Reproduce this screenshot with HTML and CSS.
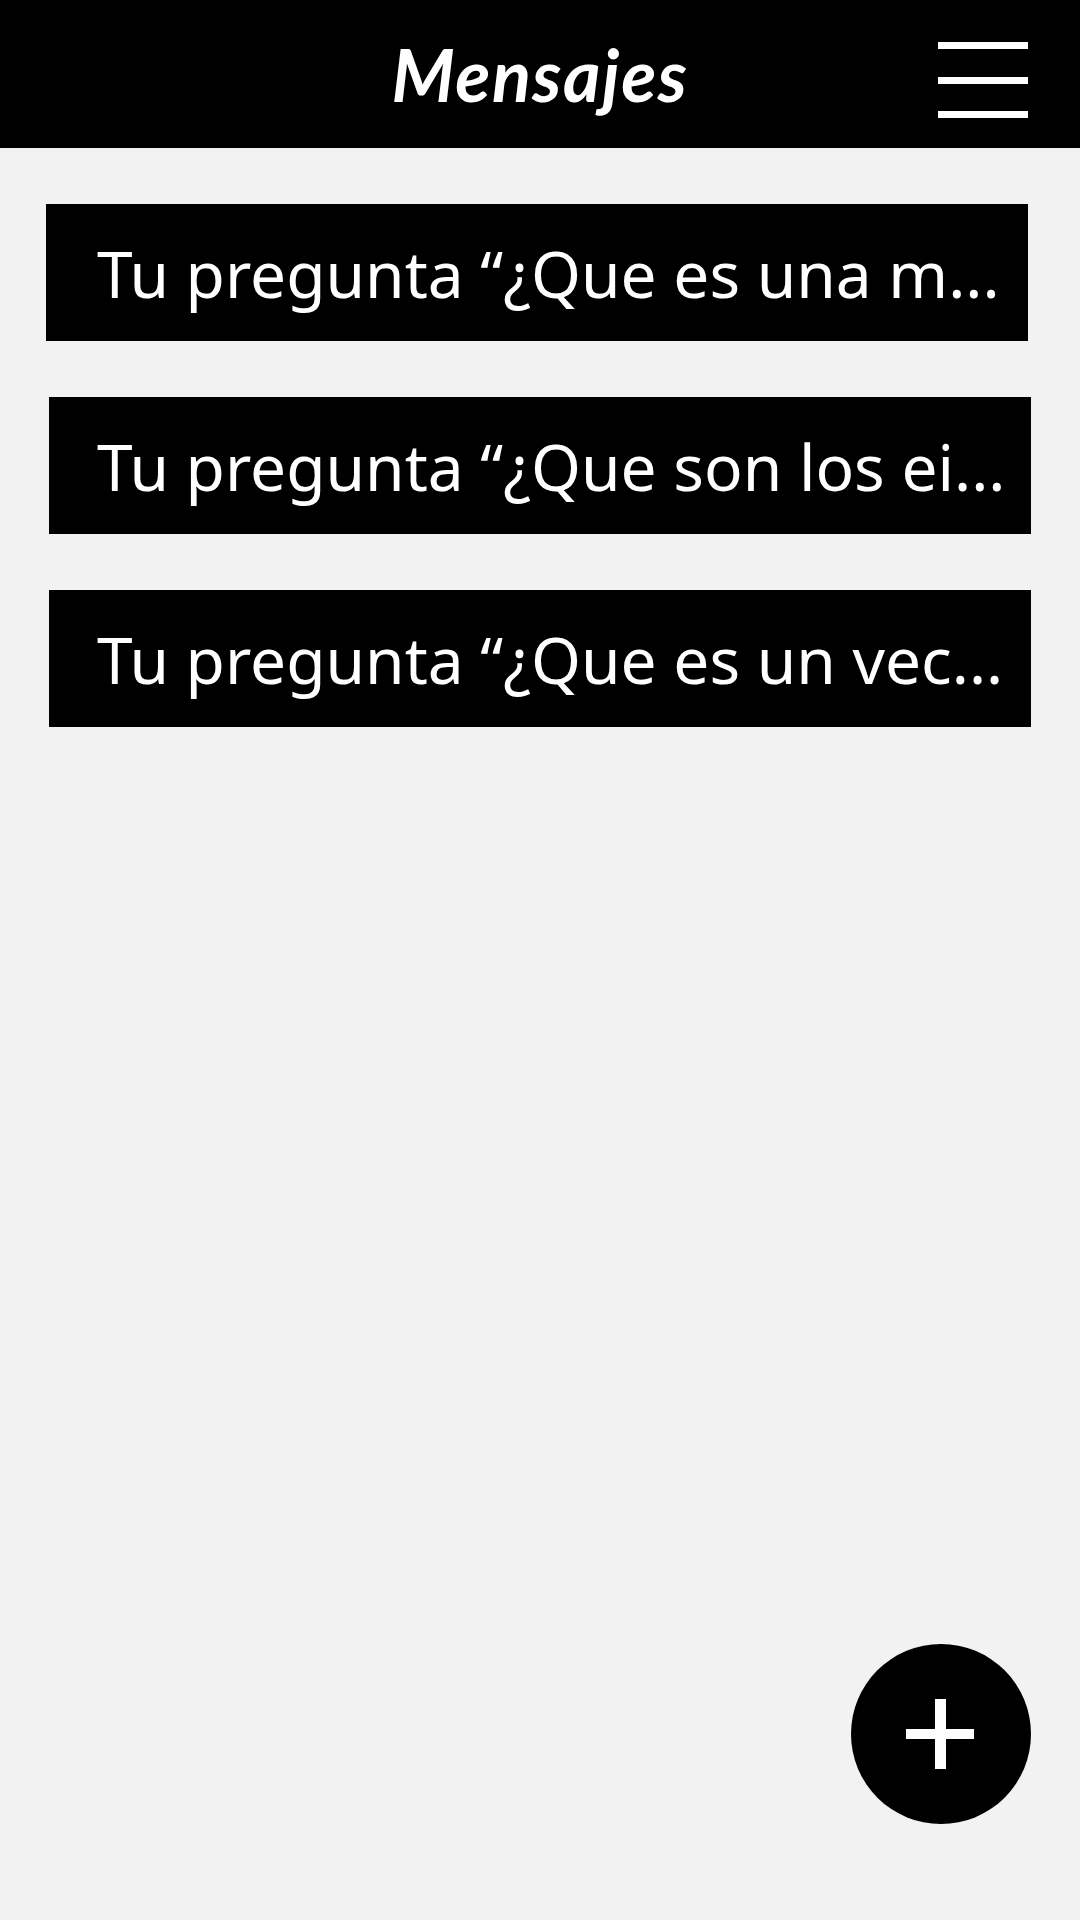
FILE: index.html
```html
<!DOCTYPE html>
<html lang="es">
<head>
<meta charset="utf-8">
<title>Mensajes</title>
<link rel="stylesheet" href="styles.css">
</head>
<body>
<header class="topbar">
  <div class="topbar-spacer"></div>
  <h1 class="topbar-title">Mensajes</h1>
  <button class="menu-btn" aria-label="Menú">
    <span class="menu-bar"></span>
    <span class="menu-bar"></span>
    <span class="menu-bar"></span>
  </button>
</header>
<main class="message-list">
  <div class="message-card message-card--first"><span class="message-text">Tu pregunta “¿Que es una m...</span></div>
  <div class="message-card"><span class="message-text">Tu pregunta “¿Que son los ei...</span></div>
  <div class="message-card"><span class="message-text">Tu pregunta “¿Que es un vec...</span></div>
</main>
<button class="fab" aria-label="Nuevo mensaje">
  <svg class="fab-icon" viewBox="0 0 70 70" width="70" height="70">
    <rect x="0" y="30" width="68" height="10" fill="#fff"/>
    <rect x="29" y="0" width="11" height="70" fill="#fff"/>
  </svg>
</button>
</body>
</html>
```
FILE: styles.css
```css
html, body {
  margin: 0;
  padding: 0;
}
body {
  background: #f2f2f2;
  width: 1080px;
  height: 1920px;
  font-family: "Noto Sans", "Open Sans", sans-serif;
  overflow: hidden;
}
.topbar {
  height: 148px;
  background: #000;
  display: grid;
  grid-template-columns: 1fr auto 1fr;
  align-items: start;
  padding: 0 52px;
  box-sizing: border-box;
}
.topbar-title {
  margin: 0;
  color: #fff;
  font-family: "Lato", sans-serif;
  font-style: italic;
  font-weight: 700;
  font-size: 72px;
  line-height: 148px;
  height: 148px;
  letter-spacing: 1.5px;
}
.menu-btn {
  justify-self: end;
  margin-top: 42px;
  width: 90px;
  height: 76px;
  padding: 0;
  border: 0;
  background: transparent;
  display: flex;
  flex-direction: column;
  justify-content: space-between;
}
.menu-bar {
  display: block;
  width: 90px;
  height: 7px;
  background: #fff;
}
.message-list {
  display: flex;
  flex-direction: column;
  gap: 56px;
  padding: 56px 49px 0 49px;
}
.message-card {
  background: #000;
  height: 137px;
  display: flex;
  align-items: center;
  padding: 0 20px 0 48px;
  box-sizing: border-box;
}
.message-card--first {
  margin-left: -3px;
  margin-right: 3px;
  padding-left: 51px;
}
.message-text {
  color: #fff;
  font-size: 64px;
  line-height: 1.3;
  white-space: nowrap;
  padding-top: 2px;
}
.fab {
  position: fixed;
  right: 49px;
  bottom: 96px;
  width: 180px;
  height: 180px;
  border-radius: 50%;
  background: #000;
  border: 0;
  padding: 0;
  display: flex;
  align-items: center;
  justify-content: center;
}
.fab-icon {
  display: block;
}
```
